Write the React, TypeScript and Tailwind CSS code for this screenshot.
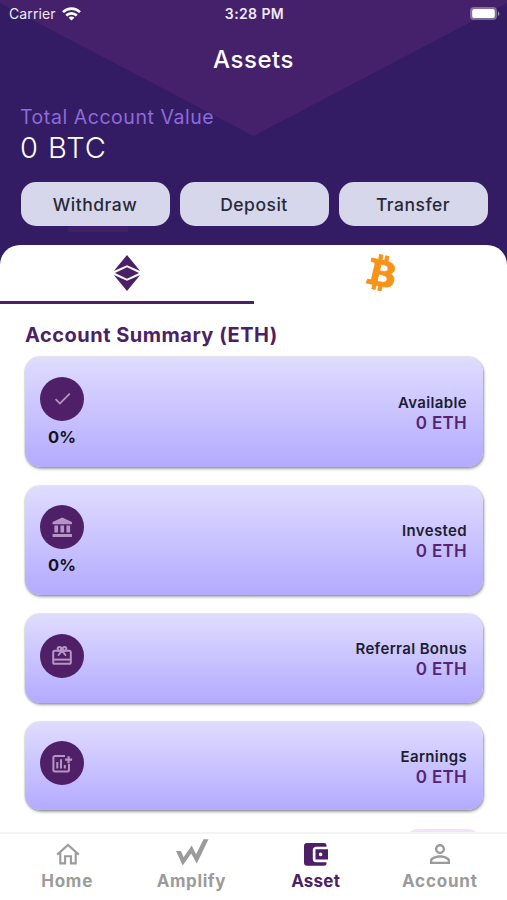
import React, { ReactElement } from 'react';
import { MdCheck, MdPersonOutline } from 'react-icons/md';
import { FaBtc } from 'react-icons/fa';

interface SummaryCard {
  title: string;
  amount: string;
  percent?: string;
  icon: ReactElement;
}

function StatusBar() {
  return (
    <div className="flex h-7 items-center justify-between pl-[9px] pr-[7px] text-[14px] leading-none text-[#f1e9f7]">
      <div className="flex w-[100px] items-center gap-[6px]">
        <span className="tracking-[0.1px]">Carrier</span>
        <svg width="19" height="14" viewBox="0 0 19 14" fill="none" stroke="#fff" strokeWidth="2.6">
          <path d="M1 5.1C5.8.5 13.2.5 18 5.1" />
          <path d="M4.2 8.5c3-2.9 7.6-2.9 10.6 0" />
          <path d="M9.5 13.4 6.6 10.7c1.6-1.6 4.2-1.6 5.8 0z" fill="#fff" stroke="none" />
        </svg>
      </div>
      <span className="pb-px text-[14px] font-semibold tracking-[0.4px]">3:28 PM</span>
      <div className="flex w-[100px] justify-end">
        <svg width="31" height="14" viewBox="0 0 31 14">
          <rect x="1" y="0" width="27" height="13" rx="4" fill="#fff" fillOpacity=".35" />
          <rect x="3.2" y="1.9" width="22.6" height="9.2" rx="2.2" fill="#fff" />
          <path d="M28.9 4.5c2 .7 2 3.7 0 4.4z" fill="#fff" fillOpacity=".5" />
        </svg>
      </div>
    </div>
  );
}

function EthIcon() {
  return (
    <svg width="28" height="38" viewBox="0 0 28 38" fill="#4d1f67">
      <path d="M14 1 27.2 17.1 14 11.3.8 17.1z" />
      <path d="M14 13.2 26 18.9 14 24.7 2 18.9z" />
      <path d="M.8 20.9 14 26.8l13.2-5.9L14 37z" />
    </svg>
  );
}

function BankIcon() {
  return (
    <svg width="24.5" height="23" viewBox="0 0 24 24" preserveAspectRatio="none" fill="currentColor">
      <path d="M12 1.5 2.5 6.3v2.4h19V6.3zM4.3 10h3.6v7.2H4.3zM10.2 10h3.6v7.2h-3.6zM16.1 10h3.6v7.2h-3.6zM2.5 18.7h19v3.3h-19z" />
    </svg>
  );
}

function GiftIcon() {
  return (
    <svg width="20" height="19" viewBox="0 0 20 19" fill="none" stroke="currentColor" strokeWidth="2">
      <rect x="1.2" y="4.8" width="17.6" height="13" rx="1.6" />
      <path d="M1 13.6h18" />
      <path d="M10 4.6 6.6 9M10 4.6 13.4 9" strokeLinecap="round" />
      <circle cx="7.5" cy="2.9" r="1.8" />
      <circle cx="12.5" cy="2.9" r="1.8" />
    </svg>
  );
}

function ChartPlusIcon() {
  return (
    <svg width="21" height="19" viewBox="0 0 21 19" fill="none" stroke="currentColor" strokeWidth="2">
      <path d="M13 2H3a1.6 1.6 0 0 0-1.6 1.6v12.2A1.6 1.6 0 0 0 3 17.4h12.4a1.6 1.6 0 0 0 1.6-1.6V10" />
      <path d="M16.6 2.2v7M13.1 5.7h7" strokeWidth="2.2" />
      <path d="M5.3 8v6.4M9 5.2v9.2M12.8 11v3.4" />
    </svg>
  );
}

function HomeIcon() {
  return (
    <svg width="24" height="22" viewBox="0 0 24 22" fill="none" stroke="currentColor" strokeWidth="2.1">
      <path d="M1.2 11.6 12 1.9l10.8 9.7" />
      <path d="M4.3 9.4v11h4.8v-7.2h5.8v7.2h4.8v-11" />
    </svg>
  );
}

function AmplifyIcon() {
  return (
    <svg width="34" height="28" viewBox="0 0 34 28" fill="currentColor">
      <path d="M1 12h5l2.6 6.2L16.7 6.6l4.4 8.6L28.5.2h5L21.8 24.4l-5.6-9.8L7.7 26.6z" />
    </svg>
  );
}

function WalletIcon() {
  return (
    <svg width="24" height="23" viewBox="0 0 24 23" fill="currentColor">
      <path d="M3 0h17a2.5 2.5 0 0 1 2.5 2.5V3.8H12.3A3.5 3.5 0 0 0 8.8 7.3v8.5a3.5 3.5 0 0 0 3.5 3.5h10.2v.8A2.5 2.5 0 0 1 20 22.8H3a3 3 0 0 1-3-3V3a3 3 0 0 1 3-3z" />
      <path fillRule="evenodd" d="M11.5 6.3H24v10.2H11.5zM16.6 9.6a1.8 1.8 0 1 0 .01 3.6 1.8 1.8 0 0 0-.01-3.6z" />
    </svg>
  );
}

const cards: SummaryCard[] = [
  { title: 'Available', amount: '0 ETH', percent: '0%', icon: <MdCheck size={21} /> },
  { title: 'Invested', amount: '0 ETH', percent: '0%', icon: <BankIcon /> },
  { title: 'Referral Bonus', amount: '0 ETH', icon: <GiftIcon /> },
  { title: 'Earnings', amount: '0 ETH', icon: <ChartPlusIcon /> },
];

const tabs = [
  { label: 'Home', active: false, className: 'tracking-[0.8px]', iconClass: 'pt-[3px] pl-[2px]', icon: <HomeIcon /> },
  { label: 'Amplify', active: false, className: 'tracking-[0.6px]', iconClass: 'pl-[2px]', icon: <AmplifyIcon /> },
  { label: 'Asset', active: true, className: 'tracking-[0.2px]', iconClass: 'pt-[3px] pl-px', icon: <WalletIcon /> },
  {
    label: 'Account',
    active: false,
    className: 'tracking-[0.8px]',
    iconClass: 'pt-[3px]',
    icon: <MdPersonOutline size={30} />,
  },
];

export default function App(): ReactElement {
  return (
    <div className="relative flex h-[900px] w-[507px] flex-col overflow-hidden bg-[#331c63] font-['Inter',sans-serif]">
      {/* lighter wedge behind the header */}
      <div className="absolute inset-x-0 top-0 h-[136px] bg-[#45216b] [clip-path:polygon(0_0,100%_0,100%_3px,50%_100%,0_3px)]" />
      <div className="absolute left-[68px] top-[225px] h-[7px] w-[60px] bg-[#41206a]" />

      <header className="relative flex h-[245px] shrink-0 flex-col">
        <StatusBar />
        <h1 className="mt-4 text-center text-[24px] font-medium leading-8 tracking-[0.5px] text-white">Assets</h1>
        <div className="mt-7 pl-[20px]">
          <p className="pt-px text-[19.5px] leading-[25px] tracking-[0.55px] text-[#8d6bdb]">Total Account Value</p>
          <p className="text-[29px] font-light leading-[35px] tracking-[1px] text-white">0 BTC</p>
        </div>
        <div className="mt-[17px] grid grid-cols-3 gap-[10px] pl-[20.5px] pr-[19.5px]">
          {['Withdraw', 'Deposit', 'Transfer'].map((label) => (
            <button
              key={label}
              className="h-11 rounded-[15px] bg-[#d6d7ea] pt-[3px] text-[17.5px] font-medium tracking-[0.5px] text-[#292939]"
            >
              {label}
            </button>
          ))}
        </div>
      </header>

      <main className="relative flex grow flex-col rounded-t-[20px] bg-white">
        <div className="grid h-[59px] grid-cols-2">
          <div className="flex justify-center border-b-[3px] border-[#4d1f67] pt-[9px]">
            <EthIcon />
          </div>
          <div className="flex justify-center pl-[3px] pt-[10px]">
            <FaBtc size={36} className="rotate-[13deg] stroke-[#f7931a] stroke-[12px] text-[#f7931a]" />
          </div>
        </div>

        <h2 className="mt-[17px] pl-[25px] text-[20px] font-bold leading-7 tracking-[0.5px] text-[#4d1f67]">
          Account Summary (ETH)
        </h2>

        <div className="mt-2 flex flex-col gap-[19px] pl-[25px] pr-[24px]">
          {cards.map((card) => (
            <section
              key={card.title}
              className={`${
                card.percent ? 'h-[109.5px]' : 'h-[88.5px]'
              } flex items-center justify-between rounded-[15px] bg-linear-to-b from-[#e0dcff] to-[#b4aaff] pl-[15px] pr-4 pt-[2px] shadow-[0_0_2px_rgba(0,0,0,0.35),1px_2px_3px_rgba(0,0,0,0.35)]`}
            >
              <div className={`${card.percent ? '' : 'mb-[7px]'} flex flex-col items-center`}>
                <div className="flex size-11 items-center justify-center rounded-full bg-[#4f2068] text-[#b794c6]">
                  {card.icon}
                </div>
                {card.percent && (
                  <span className="mt-1 text-[16.5px] font-bold leading-6 text-[#15131f]">{card.percent}</span>
                )}
              </div>
              <div className="flex flex-col items-end">
                <span className="text-[15px] font-semibold leading-5 tracking-[0.35px] text-[#201d30]">
                  {card.title}
                </span>
                <span className="text-[17px] font-semibold leading-5 tracking-[0.3px] text-[#562475]">
                  {card.amount}
                </span>
              </div>
            </section>
          ))}
        </div>

        {/* top edge of the next block, cut off by the tab bar */}
        <div className="absolute bottom-[55px] left-[407px] h-4 w-[72px] rounded-t-[10px] border-[3px] border-[#f4e3f7]" />
      </main>

      <nav className="absolute inset-x-0 bottom-0 flex h-[68px] border-t-2 border-[#f3f3f4] bg-white px-[5px]">
        {tabs.map((tab) => (
          <div
            key={tab.label}
            className={`${tab.active ? 'text-[#4d1f67]' : 'text-[#9b9b9b]'} flex flex-1 flex-col items-center`}
          >
            <div className={`${tab.iconClass} flex h-[37px] items-center justify-center`}>{tab.icon}</div>
            <span className={`${tab.className} text-[17px] font-bold leading-5`}>{tab.label}</span>
          </div>
        ))}
      </nav>
    </div>
  );
}
